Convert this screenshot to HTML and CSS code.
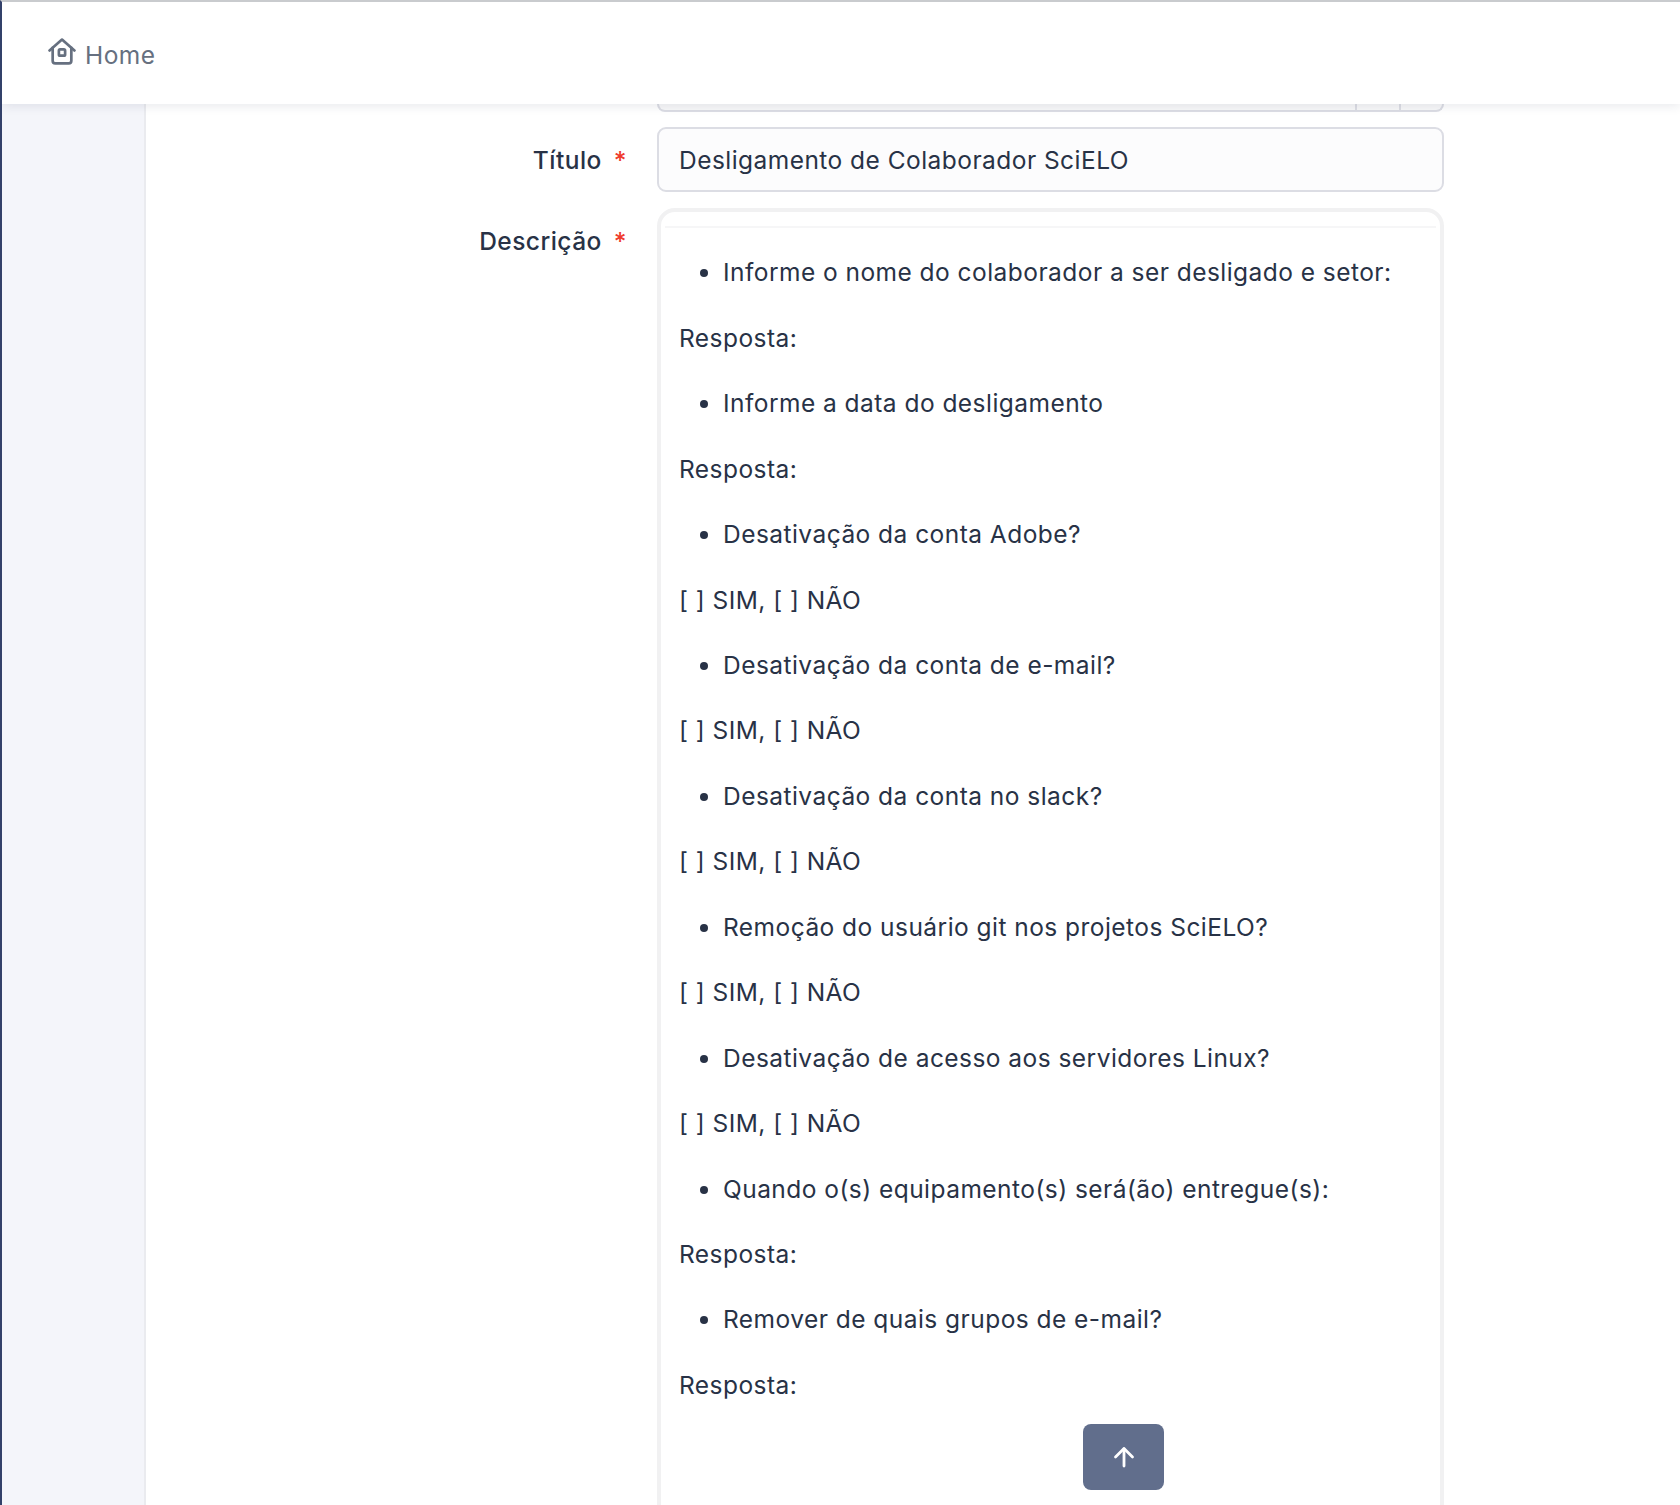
FILE: index.html
```html
<!DOCTYPE html>
<html lang="pt">
<head>
<meta charset="utf-8">
<title>Home</title>
<link rel="stylesheet" href="styles.css">
</head>
<body>
<div class="app">
  <header class="topbar">
    <a class="crumb" href="#">
      <svg class="home-icon" viewBox="0.5 0.5 27 26" fill="none" stroke="currentColor" stroke-width="2.600" stroke-linecap="round" stroke-linejoin="round">
        <path d="M2 12.5 14 2l12 10.5"/>
        <path d="M5 10v12.5A2.5 2.5 0 0 0 7.500 25h13a2.500 2.500 0 0 0 2.500-2.500V10"/>
        <rect x="11" y="11.500" width="6" height="6" rx="1.200"/>
      </svg>
      <span>Home</span>
    </a>
  </header>
  <div class="body-row">
    <aside class="sidebar"></aside>
    <main class="content">
      <div class="form-row clipped-row">
        <div class="label-col"></div>
        <div class="clipped-field">
          <div class="seg seg-main"></div>
          <div class="seg seg-btn"></div>
          <div class="seg seg-btn last"></div>
        </div>
      </div>
      <div class="form-row">
        <label class="label-col field-label">Título <span class="req">*</span></label>
        <div class="text-input">Desligamento de Colaborador SciELO</div>
      </div>
      <div class="form-row">
        <label class="label-col field-label">Descrição <span class="req">*</span></label>
        <div class="editor">
          <div class="editor-toolbar"></div>
          <div class="editor-body">
            <ul><li>Informe o nome do colaborador a ser desligado e setor:</li></ul>
            <p>Resposta:</p>
            <ul><li>Informe a data do desligamento</li></ul>
            <p>Resposta:</p>
            <ul><li>Desativação da conta Adobe?</li></ul>
            <p>[ ] SIM, [ ] NÃO</p>
            <ul><li>Desativação da conta de e-mail?</li></ul>
            <p>[ ] SIM, [ ] NÃO</p>
            <ul><li>Desativação da conta no slack?</li></ul>
            <p>[ ] SIM, [ ] NÃO</p>
            <ul><li>Remoção do usuário git nos projetos SciELO?</li></ul>
            <p>[ ] SIM, [ ] NÃO</p>
            <ul><li>Desativação de acesso aos servidores Linux?</li></ul>
            <p>[ ] SIM, [ ] NÃO</p>
            <ul><li>Quando o(s) equipamento(s) será(ão) entregue(s):</li></ul>
            <p>Resposta:</p>
            <ul><li>Remover de quais grupos de e-mail?</li></ul>
            <p>Resposta:</p>
          </div>
        </div>
      </div>
    </main>
  </div>
  <button class="to-top" type="button" aria-label="Voltar ao topo">
    <svg viewBox="0 0 24 24" fill="none" stroke="currentColor" stroke-width="2.800" stroke-linecap="round" stroke-linejoin="round">
      <path d="M12 21V4"/>
      <path d="M3.500 12 12 3.500 20.500 12"/>
    </svg>
  </button>
</div>
</body>
</html>
```
FILE: styles.css
```css
* { box-sizing: border-box; }
html, body { margin: 0; padding: 0; height: 100%; overflow: hidden; }
body {
  font-family: Inter, "Noto Sans", sans-serif;
  font-size: 24.500px;
  letter-spacing: 0.460px;
  color: #283246;
  background: #fff;
}
.app {
  position: relative;
  height: 1505px;
  border-top: 2px solid #c9cbce;
  border-left: 2px solid #33416a;
  display: flex;
  flex-direction: column;
  overflow: hidden;
}
.topbar {
  position: relative;
  z-index: 2;
  flex: none;
  height: 102px;
  background: #fff;
  box-shadow: 0 2px 10px rgba(30, 40, 70, 0.10);
  display: flex;
  align-items: center;
  padding-left: 46px;
}
.crumb {
  display: flex;
  align-items: center;
  gap: 9px;
  color: #667080;
  text-decoration: none;
  line-height: 36px;
  margin-top: 3px;
}
.home-icon { width: 28px; height: 27px; color: #667080; margin-top: -6px; }
.body-row { flex: 1; display: flex; min-height: 0; }
.sidebar {
  flex: none;
  width: 144px;
  background: #f4f5fa;
  border-right: 2px solid #eaebef;
}
.content { flex: 1; padding-right: 236px; }
.form-row { display: flex; margin-bottom: 16px; }
.form-row:first-child { margin-bottom: 15px; }
.label-col {
  flex: none;
  width: 511px;
  padding-right: 30px;
  text-align: right;
}
.field-label { font-weight: 500; line-height: 36px; padding-top: 15px; color: #283246; }
.req { color: #ef3b2d; margin-left: 5px; }
.clipped-field {
  flex: 1;
  display: flex;
  height: 8px;
  background: #f8f8f9;
  border: 2px solid #dcdde4;
  border-top: 0;
  border-radius: 0 0 8px 8px;
}
.seg { height: 100%; }
.seg-main { flex: 1; }
.seg-btn { width: 44px; border-left: 2px solid #dcdde4; }
.seg-btn.last { width: 43px; }
.text-input {
  flex: 1;
  height: 65px;
  padding: 2px 20px 0;
  line-height: 59px;
  background: #fcfcfd;
  border: 2px solid #dcdde4;
  border-radius: 9px;
}
.editor {
  flex: 1;
  height: 1400px;
  border: 4px solid #f1f1f2;
  border-radius: 18px;
  background: #fff;
}
.editor-toolbar {
  height: 16px;
  margin: 0 4px;
  border-bottom: 2px solid #f6f6f7;
}
.editor-body { padding: 0 18px; line-height: 36px; }
.editor-body p,
.editor-body ul { margin: 29.450px 0; }
.editor-body ul:first-child { margin-top: 26.400px; }
.editor-body ul { padding-left: 44px; }
.to-top {
  position: absolute;
  left: 1081px;
  top: 1422px;
  width: 81px;
  height: 66px;
  padding: 0;
  border: 0;
  border-radius: 8px;
  background: #616e8c;
  color: #fff;
  display: flex;
  align-items: center;
  justify-content: center;
}
.to-top svg { width: 24px; height: 24px; }
```
